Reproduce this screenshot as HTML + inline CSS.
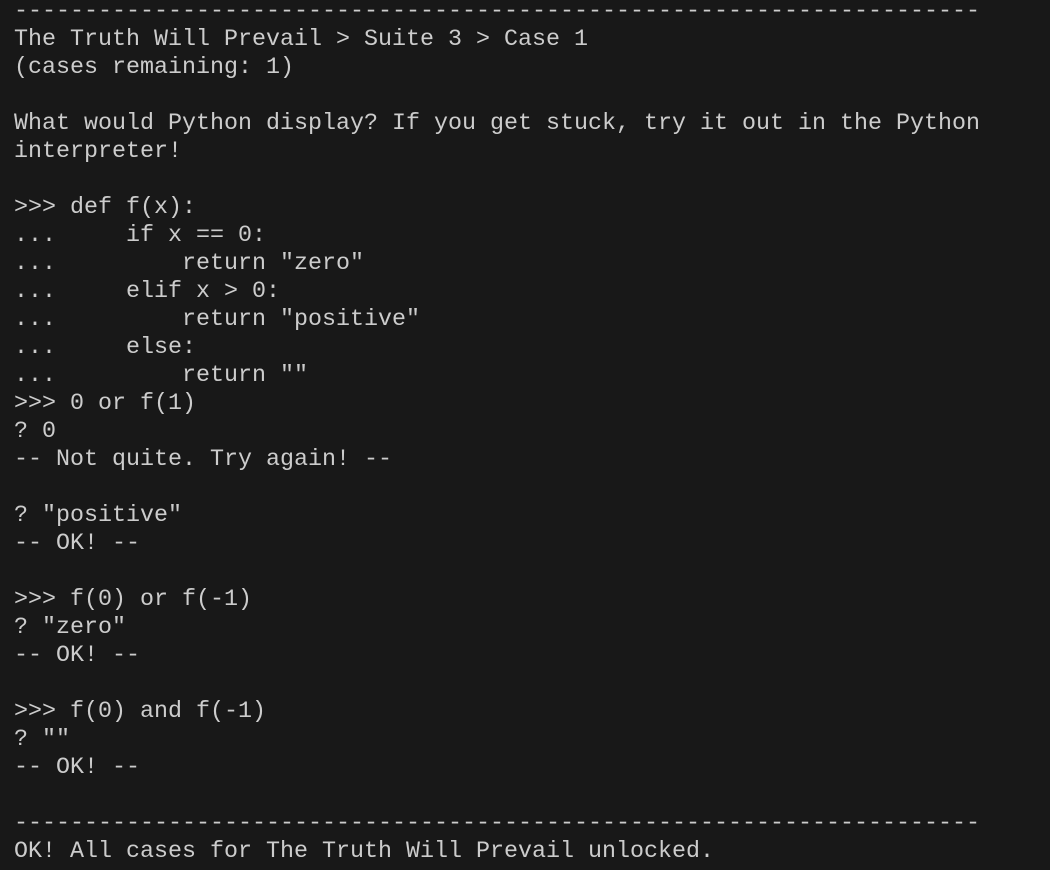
<!DOCTYPE html>
<html><head><meta charset="utf-8"><style>
html,body{margin:0;padding:0;background:#181818;width:1050px;height:870px;overflow:hidden}
pre{position:absolute;left:14px;top:-2px;margin:0;font-family:"Liberation Mono",monospace;font-size:23.33px;line-height:28px;color:#cccccc;white-space:pre}
</style></head><body><pre>---------------------------------------------------------------------
The Truth Will Prevail &gt; Suite 3 &gt; Case 1
(cases remaining: 1)

What would Python display? If you get stuck, try it out in the Python
interpreter!

&gt;&gt;&gt; def f(x):
...     if x == 0:
...         return "zero"
...     elif x &gt; 0:
...         return "positive"
...     else:
...         return ""
&gt;&gt;&gt; 0 or f(1)
? 0
-- Not quite. Try again! --

? "positive"
-- OK! --

&gt;&gt;&gt; f(0) or f(-1)
? "zero"
-- OK! --

&gt;&gt;&gt; f(0) and f(-1)
? ""
-- OK! --

---------------------------------------------------------------------
OK! All cases for The Truth Will Prevail unlocked.</pre></body></html>
